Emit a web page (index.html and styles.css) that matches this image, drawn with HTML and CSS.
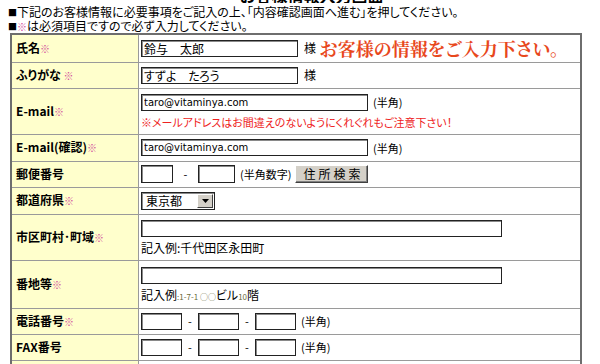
FILE: index.html
```html
<!DOCTYPE html>
<html lang="ja">
<head>
<meta charset="utf-8">
<title>お客様情報入力</title>
<link rel="stylesheet" href="styles.css">
</head>
<body>
<div class="page">
  <h2 class="title">お客様情報入力画面</h2>
  <p class="intro"><span class="sq">■</span>下記のお客様情報に必要事項をご記入の上、「内容確認画面へ進む」を押してください。</p>
  <p class="intro"><span class="sq">■</span><span class="req">※</span>は必須項目ですので必ず入力してください。</p>
  <table class="form">
    <tr class="r28">
      <th>氏名<span class="req">※</span></th>
      <td><input class="in name" type="text" value="鈴与　太郎"><span class="sama">様</span><span class="lead">お客様の情報をご入力下さい。</span></td>
    </tr>
    <tr class="r26">
      <th>ふりがな <span class="req">※</span></th>
      <td><input class="in name" type="text" value="すずよ　たろう"><span class="sama">様</span></td>
    </tr>
    <tr class="r46">
      <th>E-mail<span class="req">※</span></th>
      <td><div class="line"><input class="in mail" type="text" value="taro@vitaminya.com"><span class="hint">(半角)</span></div>
      <div class="note">※メールアドレスはお間違えのないようにくれぐれもご注意下さい！</div></td>
    </tr>
    <tr class="r27">
      <th>E-mail(確認)<span class="req">※</span></th>
      <td><div class="line"><input class="in mail" type="text" value="taro@vitaminya.com"><span class="hint">(半角)</span></div></td>
    </tr>
    <tr class="r26">
      <th>郵便番号</th>
      <td><div class="line"><input class="in zip1" type="text"><span class="dash">-</span><input class="in zip2" type="text"><span class="hint">(半角数字)</span><button class="btn" type="button">住所検索</button></div></td>
    </tr>
    <tr class="r27">
      <th>都道府県<span class="req">※</span></th>
      <td><div class="line"><span class="sel"><span class="sel-val">東京都</span><span class="sel-btn"><svg width="7" height="4" viewBox="0 0 7 4"><path d="M0 0h7L3.5 4z" fill="#000"/></svg></span></span></div></td>
    </tr>
    <tr class="r46">
      <th>市区町村･町域<span class="req">※</span></th>
      <td><input class="in long" type="text"><div class="ex">記入例:千代田区永田町</div></td>
    </tr>
    <tr class="r48">
      <th>番地等<span class="req">※</span></th>
      <td><input class="in long" type="text"><div class="ex">記入例<span class="tiny">:1-7-1 ○○</span>ビル<span class="tiny">10</span>階</div></td>
    </tr>
    <tr class="r26">
      <th>電話番号<span class="req">※</span></th>
      <td><div class="line"><input class="in tel" type="text"><span class="dash sm">-</span><input class="in tel" type="text"><span class="dash sm">-</span><input class="in tel" type="text"><span class="hint">(半角)</span></div></td>
    </tr>
    <tr class="r26">
      <th>FAX番号</th>
      <td><div class="line"><input class="in tel" type="text"><span class="dash sm">-</span><input class="in tel" type="text"><span class="dash sm">-</span><input class="in tel" type="text"><span class="hint">(半角)</span></div></td>
    </tr>
    <tr class="r26">
      <th>&nbsp;</th>
      <td>&nbsp;</td>
    </tr>
  </table>
</div>
</body>
</html>
```

FILE: styles.css
```css
html, body {
  margin: 0;
  padding: 0;
  background: #fff;
}
body {
  font-family: "Noto Sans CJK JP", "Noto Sans", sans-serif;
  font-size: 12px;
  color: #000;
  font-feature-settings: "palt";
}
.page {
  padding-left: 8px;
  width: 580px;
}
.title {
  margin: -13px 0 0 232px;
  height: 16px;
  font-size: 16px;
  line-height: 16px;
  font-weight: bold;
  overflow: hidden;
}
.intro {
  margin: 0;
  line-height: 14px;
  height: 14px;
  font-size: 12px;
  white-space: nowrap;
}
.intro:first-of-type {
  margin-top: 2px;
}
.sq {
  font-size: 9px;
  vertical-align: 1px;
}
.req {
  color: #d2509c;
  font-size: 10px;
  font-weight: bold;
}
.form {
  margin: 0 0 0 2px;
  width: 572px;
  border-collapse: collapse;
  border: 2px solid #6e6e6e;
  table-layout: fixed;
}
.form th, .form td {
  border: 1px solid #9a9a9a;
  padding: 0 0 0 2px;
  vertical-align: middle;
  line-height: 14px;
}
.form th {
  width: 122px;
  background: #ffffcc;
  text-align: left;
  font-weight: bold;
  padding-left: 4px;
  font-size: 12px;
  white-space: nowrap;
}
.r26 { height: 26px; }
.r27 { height: 27px; }
.r28 { height: 28px; }
.r46 { height: 46px; }
.r48 { height: 48px; }
.line {
  display: flex;
  align-items: center;
  height: 18px;
}
.in {
  box-sizing: border-box;
  height: 17px;
  border: 1px solid #222;
  box-shadow: inset 1px 1px 0 #8a8a8a;
  padding: 0 2px;
  margin: 0;
  background: #fff;
  vertical-align: middle;
  font-family: "Noto Sans CJK JP", sans-serif;
  font-size: 12px;
  font-feature-settings: "palt";
  color: #000;
}
.name { width: 157px; }
.mail {
  width: 227px;
  font-family: "DejaVu Sans", sans-serif;
  font-size: 10px;
}
.zip1 { width: 32px; height: 18px; }
.zip2 { width: 37px; height: 18px; }
.tel { width: 41px; }
.long { width: 361px; display: block; }
.sama {
  margin-left: 6px;
  vertical-align: middle;
  font-size: 12px;
}
.lead {
  margin-left: 3px;
  vertical-align: middle;
  color: #e8481c;
  font-size: 18px;
  line-height: 18px;
  font-weight: bold;
  font-family: "Noto Serif CJK JP", "Noto Sans CJK JP", serif;
}
.hint {
  margin-left: 5px;
  font-size: 11px;
}
.note {
  margin-top: 4px;
  color: #ee2222;
  font-size: 11px;
  line-height: 14px;
  height: 14px;
  white-space: nowrap;
}
.dash {
  width: 25px;
  text-align: center;
  font-size: 11px;
}
.dash.sm {
  width: 16px;
}
.btn {
  box-sizing: border-box;
  margin-left: 4px;
  width: 73px;
  height: 18px;
  padding: 0;
  background: #d4d0c8;
  border: 1px solid;
  border-color: #fff #404040 #404040 #fff;
  box-shadow: inset -1px -1px 0 #808080;
  font-family: "Noto Sans CJK JP", sans-serif;
  font-size: 12px;
  letter-spacing: 3px;
  text-indent: 3px;
  line-height: 16px;
  color: #000;
}
.sel {
  box-sizing: border-box;
  display: inline-flex;
  width: 74px;
  height: 18px;
  border: 1px solid #222;
  box-shadow: inset 1px 1px 0 #8a8a8a;
  align-items: stretch;
}
.sel-val {
  flex: 1;
  padding-left: 4px;
  line-height: 16px;
  font-size: 12px;
}
.sel-btn {
  box-sizing: border-box;
  width: 16px;
  margin: 1px;
  background: #d4d0c8;
  border: 1px solid;
  border-color: #fff #404040 #404040 #fff;
  display: flex;
  align-items: center;
  justify-content: center;
}
.ex {
  margin-top: 4px;
  font-size: 12px;
  line-height: 14px;
  height: 14px;
  white-space: nowrap;
}
.tiny {
  font-size: 8px;
  line-height: 8px;
  color: #6a6a3a;
}
```
